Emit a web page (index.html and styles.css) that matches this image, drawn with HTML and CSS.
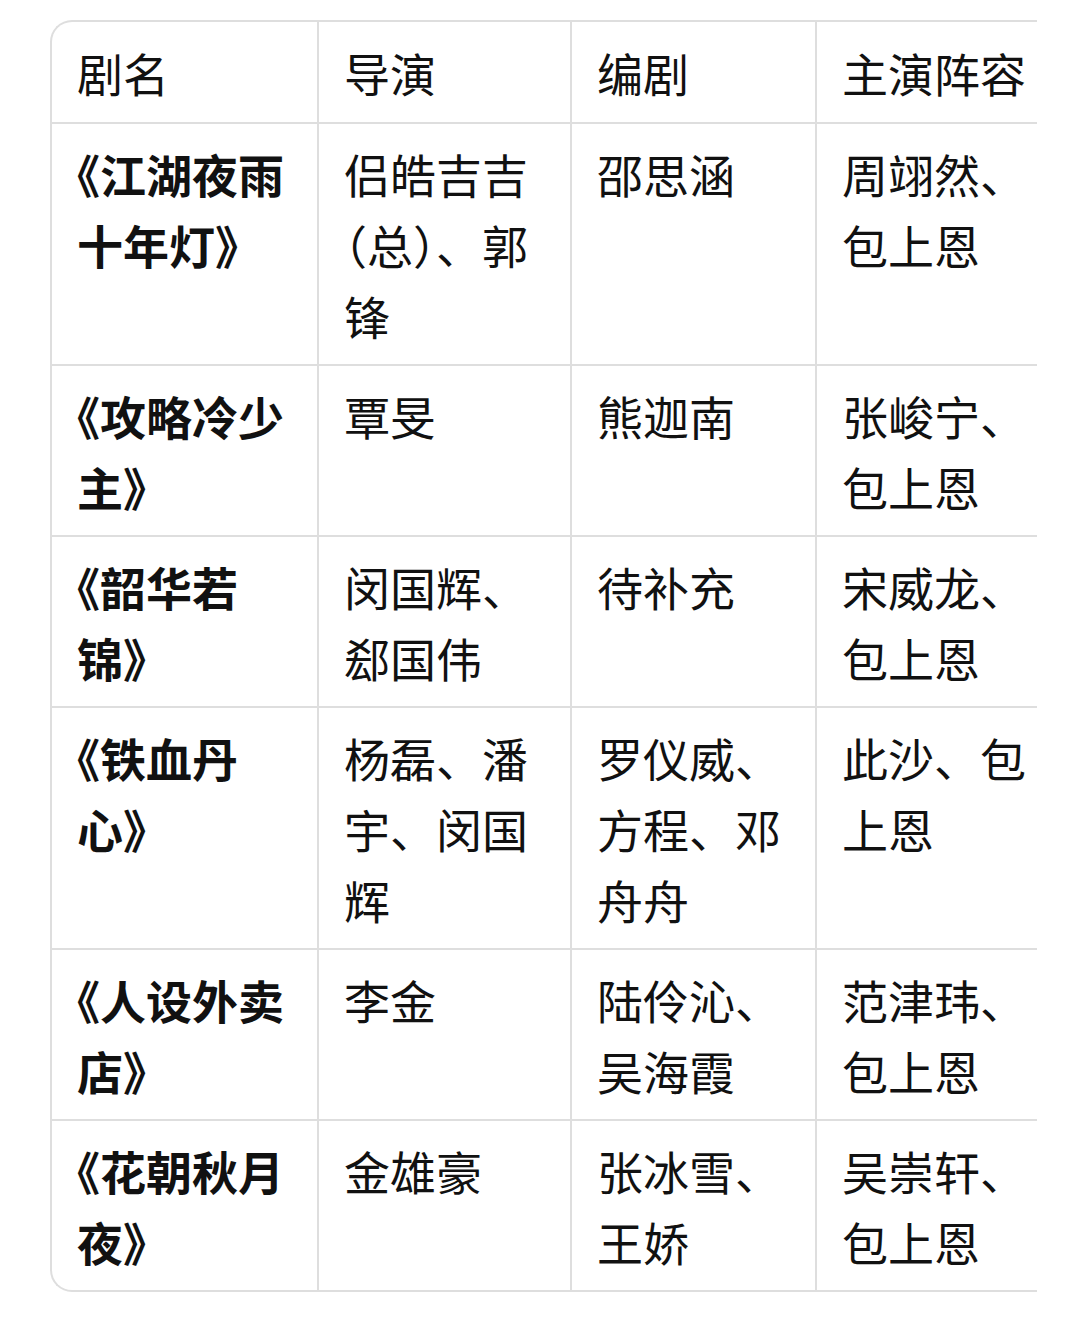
FILE: index.html
```html
<!DOCTYPE html>
<html lang="zh-CN">
<head>
<meta charset="utf-8">
<title>剧集表</title>
<link rel="stylesheet" href="styles.css">
</head>
<body>
<div class="wrap">
  <table class="grid">
    <colgroup>
      <col class="c1"><col class="c2"><col class="c3"><col class="c4">
    </colgroup>
    <thead>
      <tr><th>剧名</th><th>导演</th><th>编剧</th><th>主演阵容</th></tr>
    </thead>
    <tbody>
      <tr>
        <td class="title"><span class="h">《</span>江湖夜雨十年灯<span class="h">》</span></td>
        <td>侣皓吉吉<span class="h">（</span>总<span class="h">）</span>、郭锋</td>
        <td>邵思涵</td>
        <td>周翊然、包上恩</td>
      </tr>
      <tr>
        <td class="title"><span class="h">《</span>攻略冷少主<span class="h">》</span></td>
        <td>覃旻</td>
        <td>熊迦南</td>
        <td>张峻宁、包上恩</td>
      </tr>
      <tr>
        <td class="title"><span class="h">《</span>韶华若锦<span class="h">》</span></td>
        <td>闵国辉、郄国伟</td>
        <td>待补充</td>
        <td>宋威龙、包上恩</td>
      </tr>
      <tr>
        <td class="title"><span class="h">《</span>铁血丹心<span class="h">》</span></td>
        <td>杨磊、潘宇、闵国辉</td>
        <td>罗仪威、方程、邓舟舟</td>
        <td>此沙、包上恩</td>
      </tr>
      <tr>
        <td class="title"><span class="h">《</span>人设外卖店<span class="h">》</span></td>
        <td>李金</td>
        <td>陆伶沁、吴海霞</td>
        <td>范津玮、包上恩</td>
      </tr>
      <tr>
        <td class="title"><span class="h">《</span>花朝秋月夜<span class="h">》</span></td>
        <td>金雄豪</td>
        <td>张冰雪、王娇</td>
        <td>吴崇轩、包上恩</td>
      </tr>
    </tbody>
  </table>
</div>
</body>
</html>
```
FILE: styles.css
```css
html, body {
  margin: 0;
  padding: 0;
  background: #ffffff;
}
body {
  padding: 20px 0 0 50px;
  font-family: "Noto Sans CJK SC", "Noto Sans", sans-serif;
  color: #111111;
}
.wrap {
  width: 985px;
  border: 2px solid #dedede;
  border-right: none;
  border-radius: 22px 0 0 22px;
  overflow: hidden;
}
.grid {
  border-collapse: separate;
  border-spacing: 0;
  table-layout: fixed;
  width: 1010px;
}
.c1 { width: 267px; }
.c2 { width: 253px; }
.c3 { width: 245px; }
.c4 { width: 245px; }
.grid th,
.grid td {
  box-sizing: border-box;
  font-size: 46px;
  line-height: 71px;
  font-weight: 400;
  text-align: left;
  vertical-align: top;
  padding: 14px 25px 13px 25px;
  border-right: 2px solid #dedede;
  border-bottom: 2px solid #dedede;
  word-break: normal;
  text-spacing-trim: space-all;
}
.grid th {
  padding-top: 15px;
  padding-bottom: 14px;
}
.grid tbody tr:last-child td {
  border-bottom: none;
}
.grid td.title {
  font-weight: 700;
}
.h {
  font-feature-settings: "halt";
}
```
